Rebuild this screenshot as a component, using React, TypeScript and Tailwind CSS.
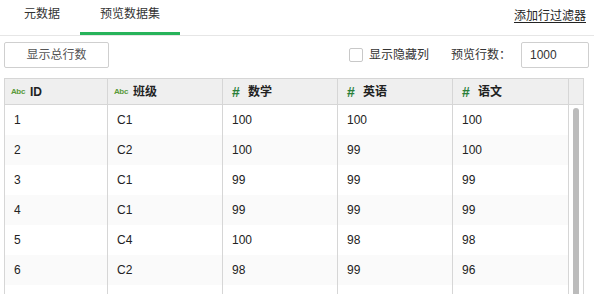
const rows = [
  ["1", "C1", "100", "100", "100"],
  ["2", "C2", "100", "99", "100"],
  ["3", "C1", "99", "99", "99"],
  ["4", "C1", "99", "99", "99"],
  ["5", "C4", "100", "98", "98"],
  ["6", "C2", "98", "99", "96"],
  ["", "", "", "", ""],
];

const colWidths = ["w-[103px]", "w-[115px]", "w-[115px]", "w-[115px]", "w-[116px]"];

function TypeTag({ kind }: { kind: "abc" | "num" }) {
  if (kind === "abc") {
    return <span className="text-[8px] font-bold leading-none text-[#5a9a3a] tracking-[-0.3px]">Abc</span>;
  }
  return <span className="text-[14px] font-bold leading-none text-[#2a7f3a]">#</span>;
}

const headers: { label: string; kind: "abc" | "num" }[] = [
  { label: "ID", kind: "abc" },
  { label: "班级", kind: "abc" },
  { label: "数学", kind: "num" },
  { label: "英语", kind: "num" },
  { label: "语文", kind: "num" },
];

export default function App() {
  return (
    <div
      className="h-[294px] w-[594px] overflow-hidden bg-white text-[12px] text-[#333]"
      style={{ fontFamily: '"Liberation Sans", "Noto Sans CJK SC", sans-serif' }}
    >
      <div className="flex h-[36px] items-start justify-between border-b border-[#e6e6e6] pl-[4px] pr-[8px]">
        <div className="flex">
          <div className="flex h-[35px] w-[76px] justify-center pt-[6px] leading-[16px]">元数据</div>
          <div className="flex h-[35px] w-[100px] justify-center border-b-[3px] border-[#27b35a] pt-[6px] leading-[16px]">
            预览数据集
          </div>
        </div>
        <a className="pt-[8px] leading-[16px] text-[#222] underline underline-offset-[2px]">添加行过滤器</a>
      </div>

      <div className="flex items-start justify-between pl-[4px] pr-[5px] pb-[10px] pt-[6px]">
        <button className="h-[26px] w-[105px] rounded-[2px] border border-[#cfcfcf] bg-white text-[#555]">
          显示总行数
        </button>
        <div className="flex h-[26px] items-center">
          <span className="h-[14px] w-[14px] rounded-[2px] border border-[#c8c8c8] bg-white" />
          <span className="ml-[6px]">显示隐藏列</span>
          <span className="ml-[22px]">预览行数：</span>
          <div className="ml-[10px] flex h-[26px] w-[68px] items-center rounded-[2px] border border-[#cfcfcf] pl-[8px] text-[#333]">
            1000
          </div>
        </div>
      </div>

      <div className="ml-[4px] w-[580px] border border-[#d6d6d6] text-[#222]">
        <div className="flex h-[26px] bg-[#efefef]">
          {headers.map((h, i) => (
            <div
              key={h.label}
              className={`${colWidths[i]} flex items-center gap-[5px] border-r border-b border-[#d6d6d6] pl-[6px] font-bold`}
            >
              <span className="flex w-[14px] justify-center">
                <TypeTag kind={h.kind} />
              </span>
              <span>{h.label}</span>
            </div>
          ))}
          <div className="w-[14px] border-b border-[#d6d6d6]" />
        </div>
        <div className="flex">
          <div className="flex flex-col">
            {rows.map((r, ri) => (
              <div key={ri} className={`flex h-[30px] ${ri % 2 === 1 ? "bg-[#fafafa]" : "bg-white"}`}>
                {r.map((c, ci) => (
                  <div key={ci} className={`${colWidths[ci]} flex items-center border-r border-[#d6d6d6] pl-[9px]`}>
                    {c}
                  </div>
                ))}
              </div>
            ))}
          </div>
          <div className="w-[14px] pl-[4px] pt-[3px]">
            <div className="h-full w-[6px] rounded-t-[3px] bg-[#bcbcbc]" />
          </div>
        </div>
      </div>
    </div>
  );
}
